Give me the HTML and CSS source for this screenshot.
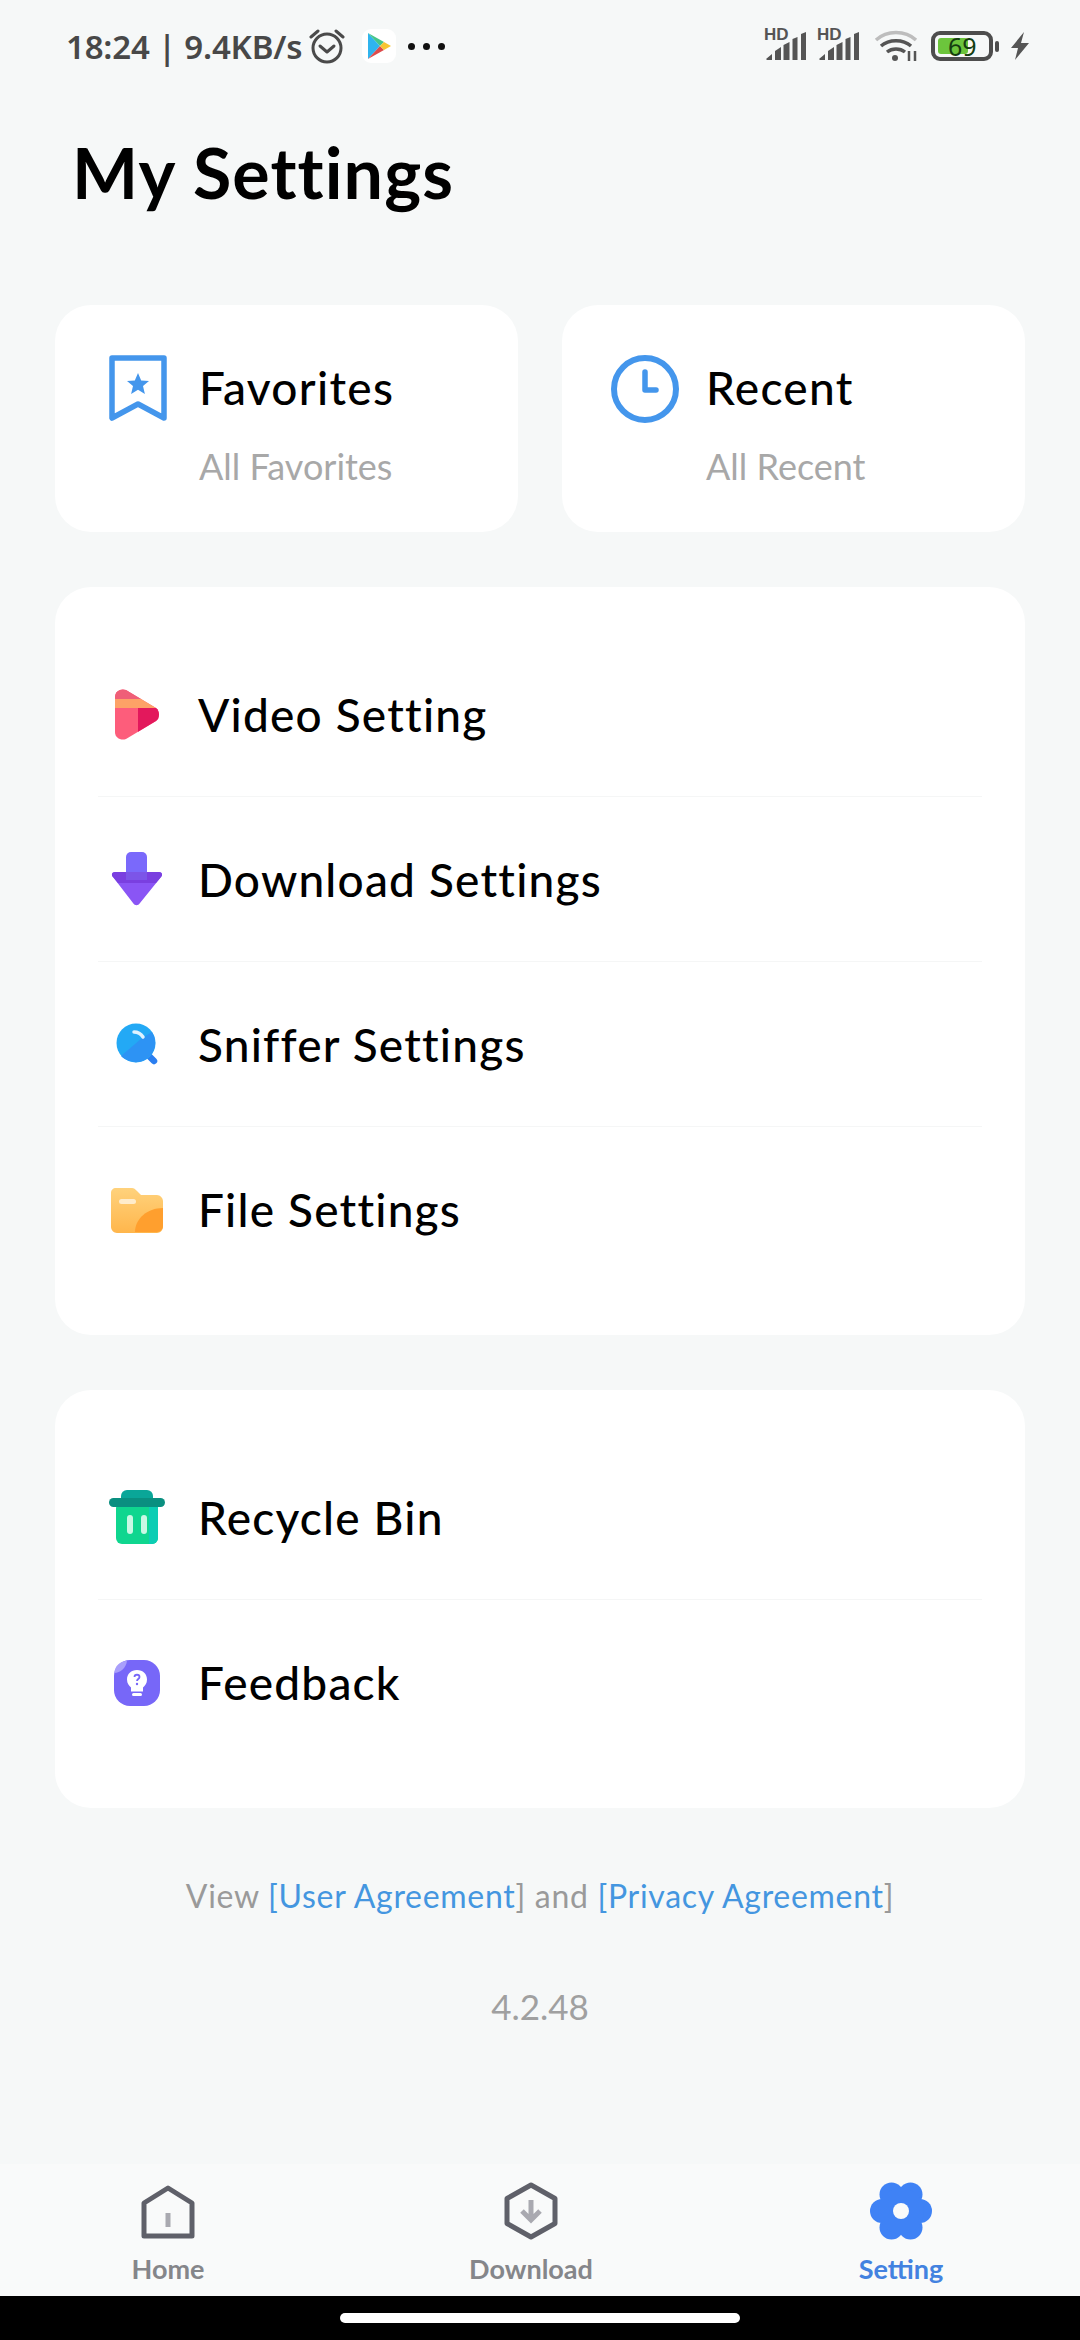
FILE: index.html
```html
<!DOCTYPE html>
<html lang="en">
<head>
    <meta charset="UTF-8">
    <meta name="viewport" content="width=device-width, initial-scale=1.0">
    <title>My Settings</title>
    <link rel="stylesheet" href="styles.css">
</head>

<body>
    <div class="page">
        <div class="status-bar">
            <div class="status-left">
                <span class="status-text">18:24 | 9.4KB/s</span>
                <svg class="alarm" width="36" height="36" viewBox="0 0 36 36" fill="none" stroke="#4a4a4a">
                    <circle cx="18" cy="20" r="14" stroke-width="3"/>
                    <path d="M11 18l7 6 7-6" stroke-width="3" stroke-linecap="round" stroke-linejoin="round"/>
                    <path d="M2 9l7-6M34 9l-7-6" stroke-width="3" stroke-linecap="round"/>
                </svg>
                <div class="play-box">
                    <svg width="24" height="28" viewBox="0 0 24 28">
                        <path d="M1 1l12 13L1 27z" fill="#2fb4ee"/>
                        <path d="M1 1l16 9-4 4z" fill="#45c58a"/>
                        <path d="M1 27l16-9-4-4z" fill="#dd4b4b"/>
                        <path d="M17 10l7 4-7 4-4-4z" fill="#f8c532"/>
                    </svg>
                </div>
                <div class="dots"><i></i><i></i><i></i></div>
            </div>
            <div class="status-right">
                <div class="signal">
                    <span class="hd">HD</span>
                    <svg width="42" height="30" viewBox="0 0 42 30" fill="#555">
                        <path d="M1 28l6-5v6H2zM10 20l6-4v13h-6zM18.500 14l6-3v18h-6zM27.500 8l5-2v23h-5zM36 3l5-2v28h-5z"/>
                    </svg>
                </div>
                <div class="signal">
                    <span class="hd">HD</span>
                    <svg width="42" height="30" viewBox="0 0 42 30" fill="#555">
                        <path d="M1 28l6-5v6H2zM10 20l6-4v13h-6zM18.500 14l6-3v18h-6zM27.500 8l5-2v23h-5zM36 3l5-2v28h-5z"/>
                    </svg>
                </div>
                <svg class="wifi" width="44" height="32" viewBox="0 0 44 32" fill="none">
                    <path d="M2 10C13 0 31 0 42 10" stroke="#bdbdbd" stroke-width="3.500"/>
                    <path d="M7 16c8-7 22-7 30 0M13 22c5-4 13-4 18 0" stroke="#555" stroke-width="3.500"/>
                    <circle cx="21" cy="28" r="3" fill="#555"/>
                    <path d="M35 21v10M41 21v10" stroke="#555" stroke-width="2.500"/>
                </svg>
                <div class="battery">
                    <div class="battery-body">
                        <div class="battery-level"></div>
                        <span class="battery-num">69</span>
                    </div>
                    <div class="battery-tip"></div>
                </div>
                <svg class="bolt" width="20" height="30" viewBox="0 0 20 30" fill="#555">
                    <path d="M14 1L1 17h7l-3 12 14-17h-8z"/>
                </svg>
            </div>
        </div>

        <h1 class="title">My Settings</h1>

        <div class="quick-row">
            <div class="card quick-card">
                <svg class="quick-icon" width="58" height="68" viewBox="0 0 58 68" fill="none">
                    <path d="M3 3h52v60L29 49 3 63z" stroke="#4496ec" stroke-width="5.500" stroke-linejoin="round"/>
                    <path d="M29 18l3.200 7.500 7.800.6-6 5 1.900 7.900L29 34.800 22.100 39l1.900-7.900-6-5 7.800-.6z" fill="#4496ec"/>
                </svg>
                <div class="quick-text">
                    <div class="quick-name">Favorites</div>
                    <div class="quick-sub">All Favorites</div>
                </div>
            </div>
            <div class="card quick-card quick-card-right">
                <svg class="quick-icon" width="68" height="68" viewBox="0 0 68 68" fill="none" stroke="#4496ec">
                    <circle cx="34" cy="34" r="31" stroke-width="6"/>
                    <path d="M34 17v18h11" stroke-width="5.500" stroke-linecap="round" stroke-linejoin="round"/>
                </svg>
                <div class="quick-text">
                    <div class="quick-name">Recent</div>
                    <div class="quick-sub">All Recent</div>
                </div>
            </div>
        </div>

        <div class="card list-card">
            <div class="list-row">
                <div class="row-icon">
                    <svg width="44" height="51" viewBox="0 0 44 51">
                        <defs>
                            <clipPath id="playClip">
                                <path d="M0 8C0 2 6-1 11 1l30 18c4 3 4 10 0 13L11 50c-5 2-11-1-11-7z"/>
                            </clipPath>
                        </defs>
                        <g clip-path="url(#playClip)">
                            <rect width="44" height="51" fill="#fd5d7b"/>
                            <rect width="44" height="10" fill="#ef5f78"/>
                            <rect y="10" width="44" height="9" fill="#fda267"/>
                            <rect x="23" y="19" width="21" height="32" fill="#e3185c"/>
                        </g>
                    </svg>
                </div>
                <span class="row-label">Video Setting</span>
            </div>
            <div class="list-row">
                <div class="row-icon">
                    <svg width="52" height="54" viewBox="0 0 52 54">
                        <rect x="15" y="0" width="21" height="32" rx="5" fill="#7a69fb"/>
                        <path d="M4 20h44c3 0 4 3 2 5L29 51c-2 3-5 3-7 0L2 25c-2-2-1-5 2-5z" fill="#8a55f5"/>
                        <path d="M4 20h11v4h21v-4h12c3 0 4 3 2 5l-5 6H7l-5-6c-2-2-1-5 2-5z" fill="#7a3fe0"/>
                        <rect x="15" y="20" width="21" height="8" fill="#7c55e8"/>
                    </svg>
                </div>
                <span class="row-label">Download Settings</span>
            </div>
            <div class="list-row">
                <div class="row-icon">
                    <svg width="42" height="42" viewBox="0 0 42 42">
                        <path d="M31 31l7 7" stroke="#2a7ef0" stroke-width="6.500" stroke-linecap="round"/>
                        <circle cx="20" cy="20" r="19.500" fill="#23a9f5"/>
                        <path d="M36 9a19.500 19.500 0 0 1-27 27c-2-1-3-2-4-3l21-18z" fill="#2d93f4"/>
                        <path d="M18 9c4 0 7 2 9 5" fill="none" stroke="#dff3ff" stroke-width="3.500" stroke-linecap="round"/>
                    </svg>
                </div>
                <span class="row-label">Sniffer Settings</span>
            </div>
            <div class="list-row">
                <div class="row-icon">
                    <svg width="52" height="46" viewBox="0 0 52 46">
                        <defs>
                            <linearGradient id="folderGrad" x1="0" y1="0" x2="0" y2="1">
                                <stop offset="0" stop-color="#ffd27c"/>
                                <stop offset="1" stop-color="#ffb64c"/>
                            </linearGradient>
                        </defs>
                        <path d="M0 6c0-3 2-5 5-5h16c2 0 3 1 5 3l4 4h16c3 0 6 3 6 6v26c0 3-3 6-6 6H6c-3 0-6-3-6-6z" fill="url(#folderGrad)"/>
                        <path d="M24 45c0-13 12-24 28-24v18c0 3-3 6-6 6z" fill="#ff9f2e"/>
                        <rect x="8" y="12" width="17" height="5" rx="2.500" fill="#ffeccb"/>
                    </svg>
                </div>
                <span class="row-label">File Settings</span>
            </div>
        </div>

        <div class="card list-card">
            <div class="list-row">
                <div class="row-icon">
                    <svg width="56" height="54" viewBox="0 0 56 54">
                        <rect x="7" y="12" width="42" height="42" rx="6" fill="#0fd68f"/>
                        <path d="M40 12h9v36c0 3-3 6-6 6h-3z" fill="#0ccdb4"/>
                        <rect x="12" y="0" width="32" height="14" rx="6" fill="#0aa698"/>
                        <rect x="0" y="8" width="56" height="9" rx="4.500" fill="#0a8f80"/>
                        <rect x="18" y="25" width="6" height="19" rx="3" fill="#c9f8e4"/>
                        <rect x="32" y="25" width="6" height="19" rx="3" fill="#c9f8e4"/>
                    </svg>
                </div>
                <span class="row-label">Recycle Bin</span>
            </div>
            <div class="list-row">
                <div class="row-icon">
                    <svg width="46" height="46" viewBox="0 0 46 46">
                        <rect x="0" y="0" width="46" height="46" rx="16" fill="#7767f8"/>
                        <path d="M13 .5C5 2 1 6 .3 13c6 0 12-5 12.700-12.500z" fill="#a99ffb"/>
                        <path d="M23 10c6 0 10 4 10 9.500 0 4-2 6-4 8v4H17v-4c-2-2-4-4-4-8C13 14 17 10 23 10z" fill="#fff"/>
                        <rect x="18" y="33" width="10" height="3" rx="1.500" fill="#fff"/>
                        <path d="M20.500 17c0-3 5-3 5 0 0 2-2.500 2-2.500 4" fill="none" stroke="#7767f8" stroke-width="1.800"/>
                        <circle cx="23" cy="24" r="1.200" fill="#7767f8"/>
                    </svg>
                </div>
                <span class="row-label">Feedback</span>
            </div>
        </div>

        <p class="agreement">View <span class="link">[User Agreement</span>] and <span class="link">[Privacy Agreement</span>]</p>
        <p class="version">4.2.48</p>

        <div class="tab-bar">
            <div class="tab">
                <svg class="tab-home" width="54" height="54" viewBox="0 0 54 54" fill="none">
                    <path d="M3 18L27 3l24 15v33H3z" stroke="#5f6069" stroke-width="5" stroke-linejoin="round"/>
                    <rect x="24.500" y="28" width="5" height="14" fill="#a9a9b0"/>
                </svg>
                <span class="tab-label">Home</span>
            </div>
            <div class="tab">
                <svg width="54" height="58" viewBox="0 0 54 58" fill="none">
                    <path d="M27 3l24 13.500v25L27 55 3 41.500v-25z" stroke="#5f6069" stroke-width="5" stroke-linejoin="round"/>
                    <path d="M27 18v20M18 29l9 9 9-9" stroke="#a9a9b0" stroke-width="5"/>
                </svg>
                <span class="tab-label">Download</span>
            </div>
            <div class="tab tab-active">
                <svg width="62" height="58" viewBox="0 0 62 58">
                    <g fill="#3f82f5">
                        <circle cx="50" cy="29" r="12"/>
                        <circle cx="40.500" cy="12.500" r="12"/>
                        <circle cx="21.500" cy="12.500" r="12"/>
                        <circle cx="12" cy="29" r="12"/>
                        <circle cx="21.500" cy="45.500" r="12"/>
                        <circle cx="40.500" cy="45.500" r="12"/>
                        <circle cx="31" cy="29" r="23"/>
                    </g>
                    <circle cx="31" cy="29" r="8" fill="#f9fafa"/>
                </svg>
                <span class="tab-label">Setting</span>
            </div>
        </div>

        <div class="nav-bar">
            <div class="home-pill"></div>
        </div>
    </div>
</body>
</html>
```

FILE: styles.css
```css
* {
    box-sizing: border-box;
}

body {
    margin: 0;
    background-color: #f6f8f8;
    font-family: 'Lato', 'Noto Sans', sans-serif;
    color: #000;
}

.page {
    display: flex;
    flex-direction: column;
    width: 1080px;
    height: 2340px;
    overflow: hidden;
}

.status-bar {
    display: flex;
    justify-content: space-between;
    align-items: center;
    height: 92px;
    padding: 0 50px 0 66px;
    flex-shrink: 0;
}

.status-left,
.status-right {
    display: flex;
    align-items: center;
}

.status-text {
    font-family: 'Noto Sans', sans-serif;
    font-size: 33px;
    font-weight: 600;
    letter-spacing: -0.2px;
    color: #484848;
    white-space: nowrap;
}

.alarm {
    margin-left: 7px;
}

.play-box {
    display: flex;
    align-items: center;
    justify-content: center;
    width: 34px;
    height: 34px;
    margin-left: 17px;
    border-radius: 9px;
    background-color: #fff;
}

.dots {
    display: flex;
    gap: 8px;
    margin-left: 12px;
}

.dots i {
    width: 7px;
    height: 7px;
    border-radius: 50%;
    background-color: #111;
}

.status-right {
    gap: 11px;
}

.signal {
    position: relative;
    width: 42px;
    height: 30px;
}

.hd {
    position: absolute;
    left: -1px;
    top: -3px;
    font-family: 'Liberation Sans', sans-serif;
    font-size: 17px;
    font-weight: 700;
    line-height: 14px;
    color: #555;
}

.wifi {
    margin-left: 3px;
}

.battery {
    display: flex;
    align-items: center;
    gap: 2px;
    margin-left: 2px;
}

.battery-body {
    position: relative;
    width: 62px;
    height: 30px;
    padding: 3px;
    border: 4px solid #4d4d4d;
    border-radius: 9px;
}

.battery-level {
    width: 30px;
    height: 16px;
    border-radius: 3px;
    background-color: #6cc53c;
}

.battery-num {
    position: absolute;
    left: 13px;
    top: -5px;
    font-family: 'Noto Sans', sans-serif;
    font-size: 25px;
    line-height: 32px;
    color: #143d10;
}

.battery-tip {
    width: 4px;
    height: 11px;
    border-radius: 2px;
    background-color: #4d4d4d;
}

.title {
    margin: 0;
    padding: 40px 0 0 72px;
    height: 213px;
    font-size: 70px;
    font-weight: 700;
    line-height: 80px;
    letter-spacing: 1.1px;
    flex-shrink: 0;
}

.card {
    background-color: #fff;
    border-radius: 36px;
}

.quick-row {
    display: flex;
    gap: 44px;
    padding: 0 55px;
}

.quick-card {
    display: flex;
    width: 463px;
    height: 227px;
    padding: 50px 0 0 54px;
}

.quick-card-right {
    padding-left: 49px;
}

.quick-icon {
    flex-shrink: 0;
}

.quick-text {
    margin-left: 32px;
}

.quick-card-right .quick-text {
    margin-left: 27px;
}

.quick-name {
    padding-top: 5px;
    font-size: 46px;
    font-weight: 500;
    line-height: 56px;
    letter-spacing: 1.3px;
}

.quick-sub {
    margin-top: 28px;
    font-size: 36px;
    line-height: 44px;
    color: #a8a8a8;
}

.list-card {
    margin: 55px 55px 0;
    padding: 45px 43px 43px;
}

.list-row {
    display: flex;
    align-items: center;
    height: 165px;
    border-bottom: 1px solid #f5f6f6;
}

.list-row:last-child {
    border-bottom: none;
}

.row-icon {
    display: flex;
    justify-content: center;
    align-items: center;
    width: 78px;
    margin-right: 22px;
}

.row-label {
    font-size: 46px;
    font-weight: 500;
    letter-spacing: 1.2px;
}

.agreement {
    margin: 68px 0 0;
    text-align: center;
    font-size: 32px;
    line-height: 40px;
    letter-spacing: 0.7px;
    color: #9a9a9a;
}

.link {
    color: #4496e0;
}

.version {
    margin: 70px 0 0;
    text-align: center;
    font-size: 35px;
    line-height: 40px;
    color: #a0a0a0;
}

.tab-bar {
    display: grid;
    grid-template-columns: 336px 390px 350px;
    margin-top: auto;
    height: 132px;
    padding: 18px 0 0;
    background-color: #f9fafa;
    flex-shrink: 0;
}

.tab {
    display: flex;
    flex-direction: column;
    align-items: center;
    justify-content: space-between;
    height: 103px;
}

.tab-home {
    margin-top: 3px;
}

.tab-label {
    font-size: 27px;
    font-weight: 700;
    line-height: 32px;
    color: #85868a;
}

.tab-active .tab-label {
    color: #4382e0;
}

.nav-bar {
    display: flex;
    justify-content: center;
    height: 44px;
    padding-top: 17px;
    background-color: #000;
    flex-shrink: 0;
}

.home-pill {
    width: 400px;
    height: 10px;
    border-radius: 5px;
    background-color: #fff;
}
```
